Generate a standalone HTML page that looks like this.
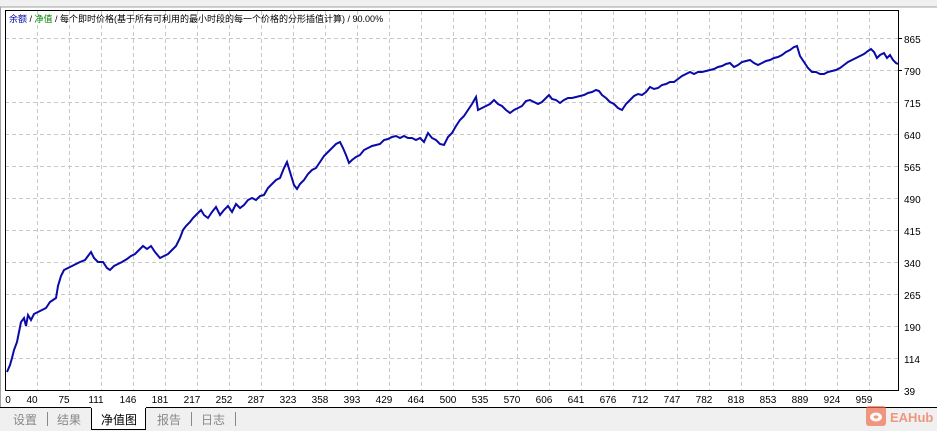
<!DOCTYPE html>
<html><head><meta charset="utf-8"><style>
html,body{margin:0;padding:0;width:937px;height:431px;overflow:hidden;background:#f0f0f0;font-family:"Liberation Sans","Noto Sans CJK SC",sans-serif}
</style></head><body>
<svg width="937" height="431" viewBox="0 0 937 431" xmlns="http://www.w3.org/2000/svg" style="position:absolute;left:0;top:0">
<rect x="0" y="0" width="937" height="7" fill="#f0f0f0"/>
<rect x="0" y="7" width="937" height="400" fill="#fff"/>
<line x1="0" y1="7" x2="937" y2="7" fill="none" stroke="#a0a0a0"/>
<line x1="0.5" y1="7" x2="0.5" y2="407" stroke="#a0a0a0"/>
<g stroke="#c8c8c8" stroke-dasharray="4,3" stroke-width="1">
<path d="M5 38.5H899M5 70.5H899M5 102.5H899M5 134.5H899M5 166.5H899M5 198.5H899M5 230.5H899M5 262.5H899M5 294.5H899M5 326.5H899M5 358.5H899"/>
<path d="M37.5 11V391M69.5 11V391M101.5 11V391M133.5 11V391M165.5 11V391M197.5 11V391M229.5 11V391M261.5 11V391M293.5 11V391M325.5 11V391M357.5 11V391M389.5 11V391M421.5 11V391M453.5 11V391M485.5 11V391M517.5 11V391M549.5 11V391M581.5 11V391M613.5 11V391M645.5 11V391M677.5 11V391M709.5 11V391M741.5 11V391M773.5 11V391M805.5 11V391M837.5 11V391M869.5 11V391"/>
</g>
<rect x="5.5" y="10.5" width="893" height="380" fill="none" stroke="#000"/>
<polyline fill="none" stroke="#0a0aaa" stroke-width="2" stroke-linejoin="miter" points="7,372 10,365 12,358 14,350 17,342 19,332 21,322 24,318 26,326 28,315 31,320 34,314 38,312 42,310 46,308 50,302 53,300 56,298 58,286 61,276 64,270 68,268 72,266 76,264 80,262 85,260 88,256 91,252 94,258 98,262 103,262 107,268 110,270 114,266 118,264 122,262 127,259 131,256 135,254 139,250 143,246 147,249 151,246 155,252 160,258 164,256 168,254 172,250 176,246 180,238 183,230 186,226 190,222 193,218 197,214 201,210 204,215 208,218 212,212 216,207 220,215 224,210 228,206 232,212 236,204 240,208 244,205 248,200 252,198 256,200 260,196 264,195 268,188 272,184 276,180 280,178 284,168 287,162 290,172 294,185 297,189 300,184 304,180 308,174 312,170 316,168 320,162 324,156 328,152 332,148 336,144 340,142 343,148 346,155 349,163 352,160 356,157 360,155 364,150 368,148 372,146 376,145 380,144 384,140 388,139 392,137 396,136 400,138 404,136 408,138 412,138 416,140 420,138 424,142 428,133 432,138 436,140 440,144 444,145 448,137 452,133 456,126 460,120 464,116 468,110 472,104 476,97 478,110 482,108 486,106 490,104 494,100 498,104 502,106 506,110 510,113 514,110 518,108 522,106 526,101 530,100 534,102 538,104 542,102 546,98 549,95 552,99 556,100 560,103 564,100 568,98 572,98 576,97 580,96 584,95 588,93 592,92 596,90 599,91 602,95 606,98 610,102 614,104 618,108 622,110 626,104 630,100 634,96 638,94 642,95 646,92 650,87 654,89 658,88 662,85 666,84 670,82 674,82 678,79 682,76 686,74 690,72 694,74 698,72 702,72 706,71 710,70 714,69 718,67 722,66 726,64 730,63 734,67 738,65 742,62 746,61 750,60 754,63 758,65 762,63 766,61 770,60 774,58 778,57 782,55 786,52 790,50 794,47 797,46 800,56 804,62 808,68 812,72 816,72 820,74 824,74 828,72 832,71 836,70 840,68 844,65 848,62 852,60 856,58 860,56 864,54 868,51 871,49 874,52 877,58 880,55 884,53 887,58 890,55 893,60 896,63 898,64"/>
<g font-size="10" fill="#000" font-family="Liberation Sans, sans-serif">
<text x="904" y="43">865</text><text x="904" y="75">790</text><text x="904" y="107">715</text><text x="904" y="139">640</text><text x="904" y="171">565</text><text x="904" y="203">490</text><text x="904" y="235">415</text><text x="904" y="267">340</text><text x="904" y="299">265</text><text x="904" y="331">190</text><text x="904" y="363">114</text><text x="904" y="395">39</text>
<line x1="899" y1="38.5" x2="902" y2="38.5" stroke="#000"/><line x1="899" y1="70.5" x2="902" y2="70.5" stroke="#000"/>
</g>
<g font-size="10" fill="#000" text-anchor="middle" font-family="Liberation Sans, sans-serif">
<text x="8" y="403">0</text><text x="32" y="403">40</text><text x="64" y="403">75</text><text x="96" y="403">111</text><text x="128" y="403">146</text><text x="160" y="403">181</text><text x="192" y="403">217</text><text x="224" y="403">252</text><text x="256" y="403">287</text><text x="288" y="403">323</text><text x="320" y="403">358</text><text x="352" y="403">393</text><text x="384" y="403">429</text><text x="416" y="403">464</text><text x="448" y="403">500</text><text x="480" y="403">535</text><text x="512" y="403">570</text><text x="544" y="403">606</text><text x="576" y="403">641</text><text x="608" y="403">676</text><text x="640" y="403">712</text><text x="672" y="403">747</text><text x="704" y="403">782</text><text x="736" y="403">818</text><text x="768" y="403">853</text><text x="800" y="403">889</text><text x="832" y="403">924</text><text x="864" y="403">959</text>
</g>
<text x="9" y="22" font-size="9" font-family="Liberation Sans, Noto Sans CJK SC, sans-serif"><tspan fill="#0000aa">余额</tspan><tspan fill="#000"> / </tspan><tspan fill="#008800">净值</tspan><tspan fill="#000"> / 每个即时价格(基于所有可利用的最小时段的每一个价格的分形插值计算) / 90.00%</tspan></text>
<rect x="0" y="407" width="937" height="24" fill="#f0f0f0"/>
<line x1="0" y1="407.5" x2="91" y2="407.5" stroke="#000"/>
<line x1="146" y1="407.5" x2="937" y2="407.5" stroke="#000"/>
<rect x="92" y="407" width="53" height="22" fill="#fff"/>
<path d="M91.5 408V429.5H145.5V408" fill="none" stroke="#000"/>
<g font-size="12" font-family="Liberation Sans, Noto Sans CJK SC, sans-serif">
<text x="13" y="424" fill="#888">设置</text><text x="57" y="424" fill="#888">结果</text><text x="101" y="424" fill="#000">净值图</text><text x="157" y="424" fill="#888">报告</text><text x="201" y="424" fill="#888">日志</text>
</g>
<g stroke="#888"><line x1="47.5" y1="412" x2="47.5" y2="426"/><line x1="191.5" y1="412" x2="191.5" y2="426"/><line x1="235.5" y1="412" x2="235.5" y2="426"/></g>
<g opacity="0.7">
<rect x="866" y="406" width="20" height="20" rx="3" fill="#f07050"/>
<ellipse cx="876" cy="417" rx="6" ry="4.5" fill="#fff"/>
<ellipse cx="876" cy="417" rx="2.5" ry="1.6" fill="#f07050"/>
<text x="890" y="422" font-size="13" font-weight="bold" fill="#f07050" font-family="Liberation Sans, sans-serif">EAHub</text>
</g>
</svg>
</body></html>
